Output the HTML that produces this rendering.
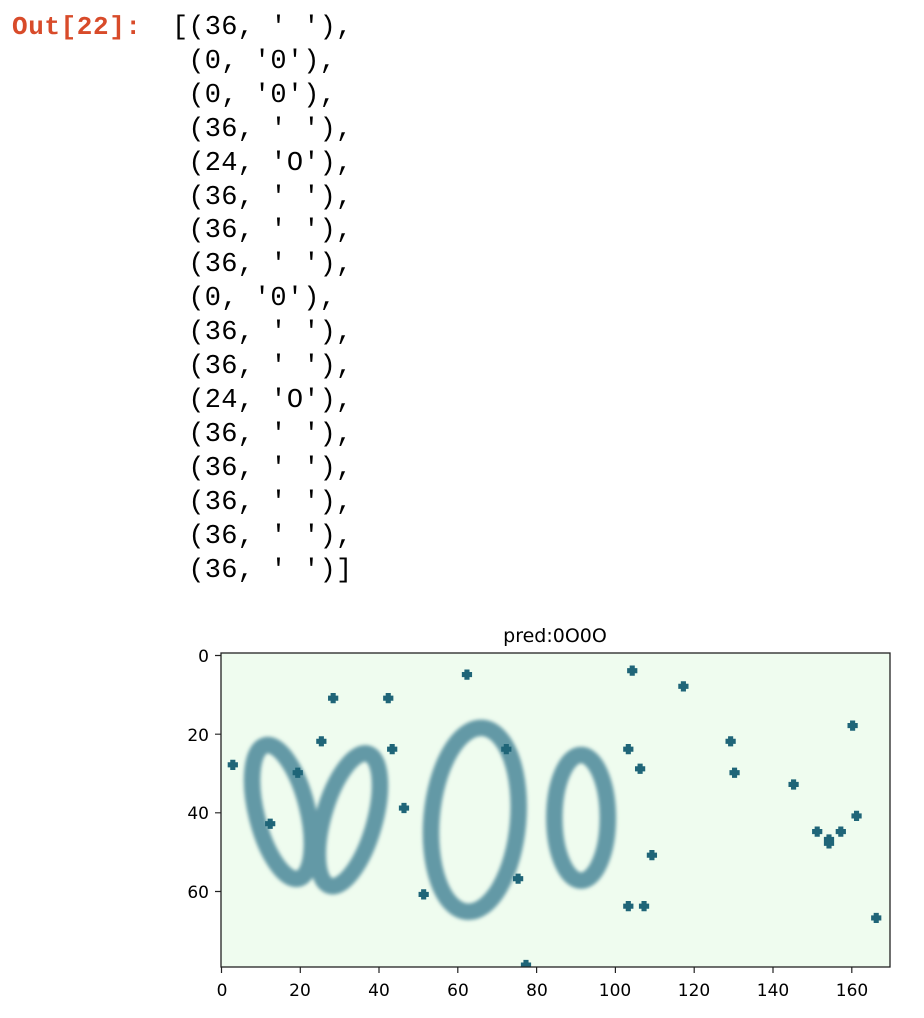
<!DOCTYPE html>
<html><head><meta charset="utf-8"><style>
body{margin:0;background:#fff;width:924px;height:1018px;position:relative;overflow:hidden}
.o{position:absolute;left:12px;top:12px;font:bold 26px "Liberation Mono",monospace;color:#d84b2a;letter-spacing:0.6px}
pre{position:absolute;left:172px;top:12px;margin:0;font:27px/33.9px "Liberation Mono",monospace;color:#000;letter-spacing:0.2px}
.t{font-family:"DejaVu Sans",sans-serif;font-size:17px;fill:#000}
</style></head><body>
<div class="o">Out[22]:</div>
<pre>[(36, ' '),
 (0, '0'),
 (0, '0'),
 (36, ' '),
 (24, 'O'),
 (36, ' '),
 (36, ' '),
 (36, ' '),
 (0, '0'),
 (36, ' '),
 (36, ' '),
 (24, 'O'),
 (36, ' '),
 (36, ' '),
 (36, ' '),
 (36, ' '),
 (36, ' ')]</pre>
<svg width="924" height="1018" style="position:absolute;left:0;top:0">
<text x="555" y="642" text-anchor="middle" class="t" style="font-size:19px">pred:0O0O</text>
<svg x="221" y="653" width="669" height="314" viewBox="-0.5 -0.5 170 80" preserveAspectRatio="none">
<defs><filter id="b"><feGaussianBlur stdDeviation="0.45"/></filter></defs>
<rect x="-0.5" y="-0.5" width="170" height="80" fill="#effcef"/>
<g fill="none" stroke="#6399a6" stroke-width="4.2" filter="url(#b)">
<ellipse cx="15" cy="40" rx="6.5" ry="17.5" transform="rotate(-14 15 40)"/>
<ellipse cx="32" cy="42" rx="6.5" ry="17.5" transform="rotate(16 32 42)"/>
<ellipse cx="64" cy="42" rx="11" ry="23.5" transform="rotate(5 64 42)"/>
<ellipse cx="91" cy="41.5" rx="6.8" ry="16"/>
</g>
<g stroke="#1f6578" stroke-width="1.3">
<path d="M1.2 28h2.6M2.5 26.7v2.6M26.7 11h2.6M28 9.7v2.6M40.7 11h2.6M42 9.7v2.6M60.7 5h2.6M62 3.7v2.6M23.7 22h2.6M25 20.7v2.6M41.7 24h2.6M43 22.7v2.6M17.7 30h2.6M19 28.7v2.6M10.7 43h2.6M12 41.7v2.6M44.7 39h2.6M46 37.7v2.6M70.7 24h2.6M72 22.7v2.6M49.7 61h2.6M51 59.7v2.6M73.7 57h2.6M75 55.7v2.6M75.7 79h2.6M77 77.7v2.6M102.7 4h2.6M104 2.7v2.6M115.7 8h2.6M117 6.7v2.6M101.7 24h2.6M103 22.7v2.6M104.7 29h2.6M106 27.7v2.6M107.7 51h2.6M109 49.7v2.6M101.7 64h2.6M103 62.7v2.6M105.7 64h2.6M107 62.7v2.6M127.7 22h2.6M129 20.7v2.6M128.7 30h2.6M130 28.7v2.6M143.7 33h2.6M145 31.7v2.6M158.7 18h2.6M160 16.7v2.6M149.7 45h2.6M151 43.7v2.6M152.7 47h2.6M154 45.7v2.6M155.7 45h2.6M157 43.7v2.6M159.7 41h2.6M161 39.7v2.6M164.7 67h2.6M166 65.7v2.6M152.7 48h2.6M154 46.7v2.6"/>
</g>
</svg>
<rect x="221" y="653" width="669" height="314" fill="none" stroke="#222" stroke-width="1.3"/>
<g stroke="#222" stroke-width="1.2">
<path d="M221.5 967v6M300.3 967v6M379 967v6M457.8 967v6M536.6 967v6M615.4 967v6M694.2 967v6M773 967v6M851.8 967v6"/>
<path d="M221 655.5h-6M221 734.2h-6M221 812.8h-6M221 891.5h-6"/>
</g>
<g class="t" text-anchor="middle">
<text x="222" y="996">0</text><text x="300" y="996">20</text><text x="379" y="996">40</text><text x="458" y="996">60</text><text x="537" y="996">80</text><text x="615" y="996">100</text><text x="694" y="996">120</text><text x="773" y="996">140</text><text x="852" y="996">160</text>
</g>
<g class="t" text-anchor="end">
<text x="209" y="662">0</text><text x="209" y="741">20</text><text x="209" y="819">40</text><text x="209" y="898">60</text>
</g>
</svg>
</body></html>
